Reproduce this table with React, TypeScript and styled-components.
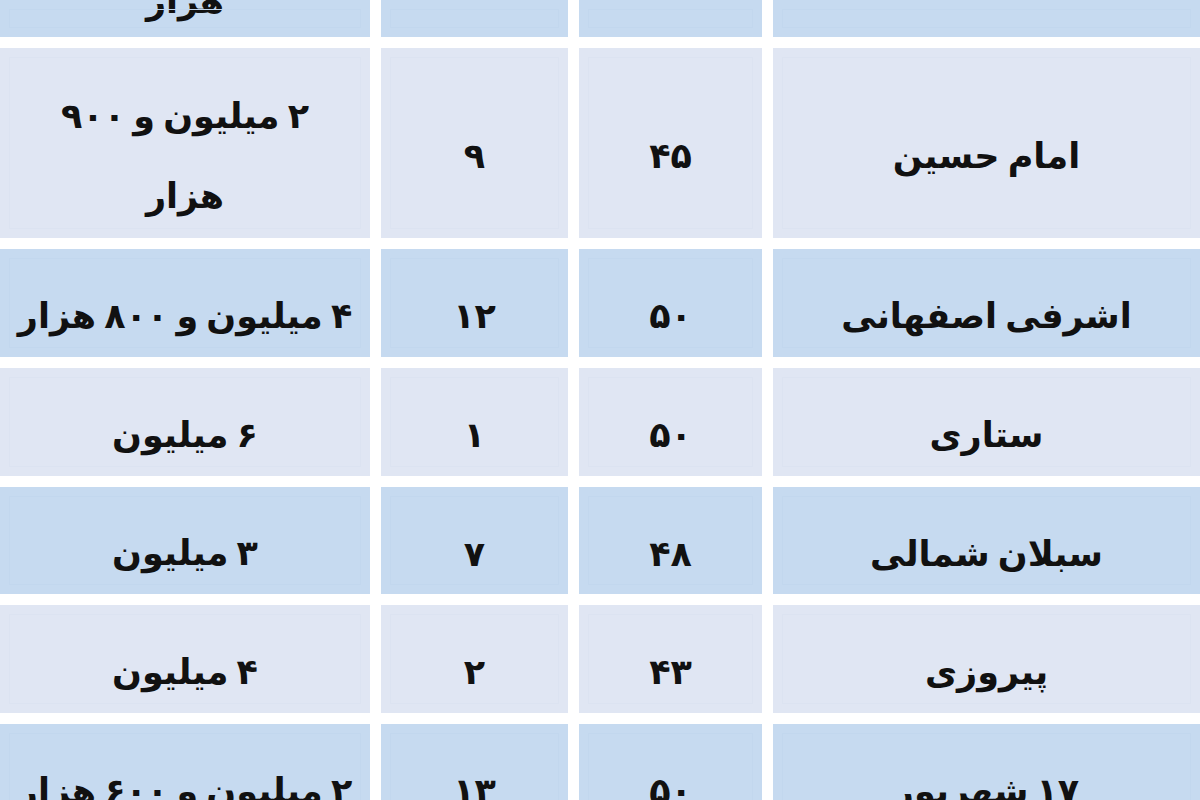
import styled, { createGlobalStyle } from "styled-components";

const GlobalStyle = createGlobalStyle`
  html, body {
    margin: 0;
    padding: 0;
    background: #ffffff;
    overflow: hidden;
  }
  body {
    width: 1200px;
    height: 800px;
  }
`;

const Table = styled.div`
  display: grid;
  direction: rtl;
  grid-template-columns: 427px 183px 187px 370px;
  grid-template-rows: 37px 190px 108px 108px 107px 108px 108px;
  gap: 11px;
  width: 1200px;
  height: 800px;
  overflow: hidden;
  font-family: "DejaVu Sans", "Noto Sans", sans-serif;
  font-weight: bold;
  color: #111111;
`;

const Cell = styled.div<{ $dark?: boolean; $top?: boolean }>`
  display: flex;
  align-items: ${(p) => (p.$top ? "flex-end" : "center")};
  justify-content: center;
  background: ${(p) => (p.$dark ? "#c6daf0" : "#e0e6f3")};
  outline: 1px solid ${(p) => (p.$dark ? "#c2d7ee" : "#dce3f1")};
  outline-offset: -10px;
  padding-top: ${(p) => (p.$top ? "0" : "26px")};
  overflow: hidden;
  font-size: 35px;
  word-spacing: -4px;
  white-space: nowrap;
  text-align: center;
`;

const Lines = styled.div<{ $top?: boolean }>`
  display: flex;
  flex-direction: column;
  align-items: center;
  line-height: 2.3;
  margin-bottom: ${(p) => (p.$top ? "-4px" : "0")};
`;

type Row = {
  name: string;
  a: string;
  b: string;
  price: string[];
};

const rows: Row[] = [
  { name: "امام حسین", a: "۴۵", b: "۹", price: ["۲ میلیون و ۹۰۰", "هزار"] },
  { name: "اشرفی اصفهانی", a: "۵۰", b: "۱۲", price: ["۴ میلیون و ۸۰۰ هزار"] },
  { name: "ستاری", a: "۵۰", b: "۱", price: ["۶ میلیون"] },
  { name: "سبلان شمالی", a: "۴۸", b: "۷", price: ["۳ میلیون"] },
  { name: "پیروزی", a: "۴۳", b: "۲", price: ["۴ میلیون"] },
  { name: "۱۷ شهریور", a: "۵۰", b: "۱۳", price: ["۲ میلیون و ۶۰۰ هزار"] },
];

export default function App() {
  return (
    <>
      <GlobalStyle />
      <Table>
        <Cell $dark $top />
        <Cell $dark $top />
        <Cell $dark $top />
        <Cell $dark $top>
          <Lines $top>
            <span>هزار</span>
          </Lines>
        </Cell>
        {rows.map((r, i) => {
          const dark = i % 2 === 1;
          return [
            <Cell key={`n${i}`} $dark={dark}>
              {r.name}
            </Cell>,
            <Cell key={`a${i}`} $dark={dark}>
              {r.a}
            </Cell>,
            <Cell key={`b${i}`} $dark={dark}>
              {r.b}
            </Cell>,
            <Cell key={`p${i}`} $dark={dark}>
              <Lines>
                {r.price.map((l) => (
                  <span key={l}>{l}</span>
                ))}
              </Lines>
            </Cell>,
          ];
        })}
      </Table>
    </>
  );
}
